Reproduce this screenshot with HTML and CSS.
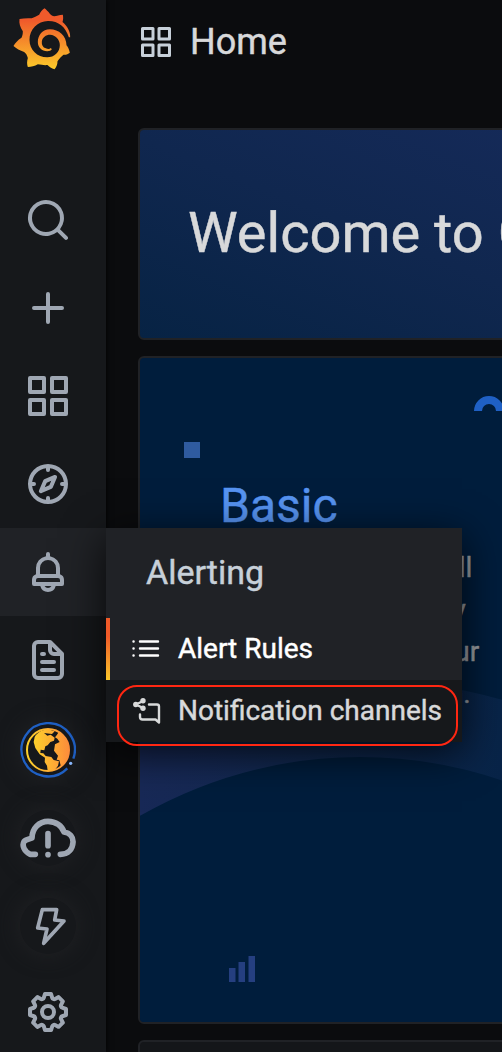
FILE: index.html
```html
<!DOCTYPE html>
<html lang="en">
<head>
<meta charset="utf-8">
<title>Home</title>
<link rel="stylesheet" href="styles.css">
</head>
<body>
<div class="app">
  <nav class="sidebar">
    <a class="brand">
      <svg class="logo" viewBox="40 24 173 186">
        <defs><linearGradient id="brand" x1="0" y1="0" x2="0" y2="1"><stop offset=".2" stop-color="#f05a2b"/><stop offset="1" stop-color="#fccb2a"/></linearGradient></defs>
        <path fill="url(#brand)" d="M211 112C212 94 202 78 188 66C191 58 190 50 189 44C179 45 170 47 163 49C158 48 154 45 150 41C145 35 139 29 134 25C127 30 122 36 118 44C110 48 103 52 96 55C82 54 70 55 59 57C57 70 61 82 69 94C69 102 68 108 65 113C54 120 46 129 41 138C49 146 61 152 73 156C79 161 82 166 84 174C81 184 81 193 84 201C94 201 105 199 114 193C125 195 136 196 143 195C148 200 155 205 164 208C170 201 173 193 173 184C178 176 184 170 191 164C198 165 205 162 210 158C208 149 205 142 200 136C200 108 177 88 150 88C128 88 114 106 114 126C114 142 126 153 142 154C149 154 154 151 156 148L153 144C149 148 143 147 138 145C129 142 125 134 126 125C127 112 138 104 151 104C167 105 180 119 180 135C180 156 164 172 142 172C112 172 89 149 89 119C89 88 114 64 144 63C174 62 198 80 207 112Z"/>
      </svg>
    </a>
    <a class="nav-item"><svg class="icon" viewBox="0 0 24 24"><path d="M21.71,20.29,18,16.61A9,9,0,1,0,16.61,18l3.68,3.68a1,1,0,0,0,1.42,0A1,1,0,0,0,21.71,20.29ZM11,18a7,7,0,1,1,7-7A7,7,0,0,1,11,18Z"/></svg></a>
    <a class="nav-item"><svg class="icon" viewBox="0 0 24 24"><path d="M19,11H13V5a1,1,0,0,0-2,0v6H5a1,1,0,0,0,0,2h6v6a1,1,0,0,0,2,0V13h6a1,1,0,0,0,0-2Z"/></svg></a>
    <a class="nav-item"><svg class="icon" viewBox="0 0 24 24"><path d="M10,13H3a1,1,0,0,0-1,1v7a1,1,0,0,0,1,1h7a1,1,0,0,0,1-1V14A1,1,0,0,0,10,13ZM9,20H4V15H9ZM21,2H14a1,1,0,0,0-1,1v7a1,1,0,0,0,1,1h7a1,1,0,0,0,1-1V3A1,1,0,0,0,21,2ZM20,9H15V4h5Zm1,4H14a1,1,0,0,0-1,1v7a1,1,0,0,0,1,1h7a1,1,0,0,0,1-1V14A1,1,0,0,0,21,13Zm-1,7H15V15h5ZM10,2H3A1,1,0,0,0,2,3v7a1,1,0,0,0,1,1h7a1,1,0,0,0,1-1V3A1,1,0,0,0,10,2ZM9,9H4V4H9Z"/></svg></a>
    <a class="nav-item"><svg class="icon" viewBox="0 0 24 24"><path d="M12,2A10,10,0,1,0,22,12,10,10,0,0,0,12,2Zm1,17.93V19a1,1,0,0,0-2,0v.93A8,8,0,0,1,4.07,13H5a1,1,0,0,0,0-2H4.07A8,8,0,0,1,11,4.07V5a1,1,0,0,0,2,0V4.07A8,8,0,0,1,19.93,11H19a1,1,0,0,0,0,2h.93A8,8,0,0,1,13,19.93ZM15.14,7.55l-5,2.12a1,1,0,0,0-.52.52l-2.12,5a1,1,0,0,0,.21,1.1,1,1,0,0,0,.7.3.93.93,0,0,0,.4-.09l5-2.12a1,1,0,0,0,.52-.52l2.12-5a1,1,0,0,0-1.31-1.31Zm-2.49,5.1-2.28,1,1-2.28,2.28-1Z"/></svg></a>
    <div class="nav-item active">
      <svg class="icon" viewBox="0 0 24 24"><path d="M18,13.18V10a6,6,0,0,0-5-5.91V3a1,1,0,0,0-2,0V4.09A6,6,0,0,0,6,10v3.18A3,3,0,0,0,4,16v2a1,1,0,0,0,1,1H8.14a4,4,0,0,0,7.72,0H19a1,1,0,0,0,1-1V16A3,3,0,0,0,18,13.18ZM8,10a4,4,0,0,1,8,0v3H8Zm4,10a2,2,0,0,1-1.72-1h3.44A2,2,0,0,1,12,20Zm6-3H6V16a1,1,0,0,1,1-1H17a1,1,0,0,1,1,1Z"/></svg>
      <div class="menu">
        <div class="menu-title">Alerting</div>
        <a class="menu-item selected">
          <svg class="menu-icon" viewBox="0 0 32 32"><path d="M3.500 8.500h.1M3.500 15.500h.1M3.500 22.500h.1M10 8.500h18M10 15.500h18M10 22.500h18"/></svg>
          <span>Alert Rules</span>
        </a>
        <a class="menu-item">
          <svg class="menu-icon" viewBox="0 0 32 32"><path d="M19 9.500H27Q29 9.500 29 11.500V27.500L25.500 24.500H12.500Q10 24.500 10 22V19.500M13 6L6 9.500L13 13"/><circle cx="5.800" cy="9.500" r="2.700"/><circle cx="13" cy="5.800" r="2.700"/><circle cx="13" cy="13.200" r="2.700"/></svg>
          <span>Notification channels</span>
        </a>
        <div class="highlight"></div>
      </div>
    </div>
    <a class="nav-item"><svg class="icon" viewBox="0 0 24 24"><path d="M9,10h1a1,1,0,0,0,0-2H9a1,1,0,0,0,0,2Zm0,2a1,1,0,0,0,0,2h6a1,1,0,0,0,0-2ZM20,8.940a1.310,1.310,0,0,0-.06-.27l0-.09a1.070,1.070,0,0,0-.19-.28h0l-6-6h0a1.070,1.070,0,0,0-.28-.19l-.1,0A1.100,1.100,0,0,0,13.060,2H7A3,3,0,0,0,4,5V19a3,3,0,0,0,3,3H17a3,3,0,0,0,3-3V9S20,9,20,8.940ZM14,5.410,16.590,8H15A1,1,0,0,1,14,7ZM18,19a1,1,0,0,1-1,1H7a1,1,0,0,1-1-1V5A1,1,0,0,1,7,4h5V7a3,3,0,0,0,3,3h3Zm-3-3H9a1,1,0,0,0,0,2h6a1,1,0,0,0,0-2Z"/></svg></a>
    <a class="nav-item">
      <span class="plugin globe"><svg viewBox="60 66 168 168" width="56" height="56">
        <defs><linearGradient id="globe"><stop offset="0" stop-color="#fcd02b"/><stop offset="1" stop-color="#ff8f3c"/></linearGradient></defs>
        <path fill="none" stroke="#1f60c4" stroke-width="7" d="M220 176A80 80 0 1 0 202 205"/>
        <circle cx="212" cy="190" r="5" fill="#8ab8ff"/>
        <circle cx="144" cy="150" r="63" fill="none" stroke="url(#globe)" stroke-width="6"/>
        <path fill="url(#globe)" d="M104 111C112 98 126 89 145 88L164 94L156 102L132 99L142 107L152 104L164 113L162 122L151 126L143 136L136 139L133 151L122 149L121 159L130 160L137 168L154 171L161 180L177 184L174 197L164 211L143 213L141 197L134 186L135 173L119 163L106 144L101 126ZM176 97C194 108 206 128 207 150C206 170 196 189 183 200L178 181L170 179L174 167L162 152L165 133L179 126L172 116L165 112L170 106Z"/>
      </svg></span>
    </a>
    <a class="nav-item">
      <span class="plugin"><svg class="line" viewBox="60 330 168 168" width="56" height="56"><path stroke-width="17" d="M106 463H90C73 454 65 437 72 425C78 416 88 418 96 414C96 385 118 364 144 364C168 364 186 378 192 396C210 399 220 412 219 427C218 447 205 463 181 463M144 401V437M144 464v.1"/></svg></span>
    </a>
    <a class="nav-item">
      <span class="plugin"><svg class="line" viewBox="60 84 168 168" width="56" height="56"><path stroke-width="11" d="M127 119H170L164 150L192 153L131 220L141 177L113 174Z"/></svg></span>
    </a>
    <a class="nav-item"><svg class="icon" viewBox="0 0 24 24"><path d="M21.320,9.550l-1.890-.63.890-1.780A1,1,0,0,0,20.130,6L18,3.870a1,1,0,0,0-1.150-.19l-1.780.89-.63-1.890A1,1,0,0,0,13.500,2h-3a1,1,0,0,0-.95.68L8.920,4.570,7.140,3.680A1,1,0,0,0,6,3.870L3.870,6a1,1,0,0,0-.19,1.150l.89,1.780-1.890.63A1,1,0,0,0,2,10.500v3a1,1,0,0,0,.68.950l1.890.63-.89,1.780A1,1,0,0,0,3.870,18L6,20.130a1,1,0,0,0,1.150.19l1.780-.89.630,1.890a1,1,0,0,0,.95.680h3a1,1,0,0,0,.95-.68l.63-1.890,1.780.89A1,1,0,0,0,18,20.130L20.130,18a1,1,0,0,0,.19-1.150l-.89-1.780,1.890-.63A1,1,0,0,0,22,13.500v-3A1,1,0,0,0,21.320,9.550ZM20,12.780l-1.200.4A2,2,0,0,0,17.640,16l.57,1.140-1.100,1.100L16,17.640a2,2,0,0,0-2.790,1.160l-.4,1.200H11.220l-.4-1.200A2,2,0,0,0,8,17.640l-1.140.57-1.100-1.100L6.360,16A2,2,0,0,0,5.200,13.180L4,12.780V11.220l1.200-.4A2,2,0,0,0,6.360,8L5.790,6.890l1.100-1.100L8,6.360A2,2,0,0,0,10.820,5.200l.4-1.200h1.560l.4,1.200A2,2,0,0,0,16,6.360l1.140-.57,1.100,1.100L17.640,8a2,2,0,0,0,1.160,2.790l1.200.4ZM12,8a4,4,0,1,0,4,4A4,4,0,0,0,12,8Zm0,6a2,2,0,1,1,2-2A2,2,0,0,1,12,14Z"/></svg></a>
  </nav>

  <main class="content">
    <header class="topbar">
      <svg class="home-icon" viewBox="2 2 20 20"><path d="M10,13H3a1,1,0,0,0-1,1v7a1,1,0,0,0,1,1h7a1,1,0,0,0,1-1V14A1,1,0,0,0,10,13ZM9,20H4V15H9ZM21,2H14a1,1,0,0,0-1,1v7a1,1,0,0,0,1,1h7a1,1,0,0,0,1-1V3A1,1,0,0,0,21,2ZM20,9H15V4h5Zm1,4H14a1,1,0,0,0-1,1v7a1,1,0,0,0,1,1h7a1,1,0,0,0,1-1V14A1,1,0,0,0,21,13Zm-1,7H15V15h5ZM10,2H3A1,1,0,0,0,2,3v7a1,1,0,0,0,1,1h7a1,1,0,0,0,1-1V3A1,1,0,0,0,10,2ZM9,9H4V4H9Z"/></svg>
      <span class="page-title">Home</span>
    </header>
    <section class="panel welcome"><h1>Welcome to Grafana</h1></section>
    <section class="panel steps">
      <svg class="backdrop" viewBox="140 358 700 664" width="700" height="664">
        <defs><linearGradient id="ring" gradientUnits="userSpaceOnUse" x1="140" y1="0" x2="502" y2="0"><stop offset="0" stop-color="#182957"/><stop offset=".5" stop-color="#10284f"/><stop offset="1" stop-color="#082448"/></linearGradient></defs>
        <circle cx="360" cy="1197" r="478.500" fill="none" stroke="url(#ring)" stroke-width="77"/>
        <rect x="140" y="820" width="700" height="210" fill="#001d3c"/>
        <path fill="#2f5b9f" d="M184 442h16v16h-16z"/>
        <path fill="none" stroke="#1f60c4" stroke-width="8" d="M478 411a11 11 0 0 1 22 0"/>
        <path fill="#253f80" d="M229 968h6.500v14h-6.500zM238.500 962h6.500v20h-6.500zM248.500 956h6.500v26h-6.500z"/>
      </svg>
      <div class="intro">
        <h2>Basic</h2>
        <p>The steps below will guide you to quickly finish setting up your Grafana installation.</p>
      </div>
    </section>
    <section class="panel next"></section>
  </main>
</div>
</body>
</html>
```

FILE: styles.css
```css
* { box-sizing: border-box; }
body {
  margin: 0;
  background: #0b0c0e;
  color: #d8d9da;
  font-family: Roboto, "Liberation Sans", sans-serif;
  -webkit-text-stroke: .45px currentColor;
  overflow: hidden;
}
h1, h2, p { margin: 0; font-weight: 400; }
svg { display: block; flex: none; }
.app { display: flex; width: 502px; height: 1052px; overflow: hidden; }

.sidebar {
  position: relative;
  z-index: 1;
  flex: none;
  width: 106px;
  background: #16181b;
  box-shadow: 0 0 6px #000;
}
.brand { display: block; height: 176px; padding: 8px 0 0 13px; }
.logo { width: 58px; height: 62px; }
.nav-item {
  display: flex;
  align-items: center;
  height: 88px;
  padding-left: 20px;
}
.icon { width: 56px; height: 48px; fill: #9fa7b3; }
.active { position: relative; background: #202226; }
.plugin {
  width: 56px;
  height: 56px;
  margin-top: 4px;
  border-radius: 50%;
  box-shadow: 0 0 20px 2px #1f2023;
}
.plugin:not(.globe) { margin-top: 3px; }
.line { fill: none; stroke: #9fa7b3; stroke-linecap: round; stroke-linejoin: round; }

.menu {
  position: absolute;
  left: 106px;
  top: 0;
  width: 356px;
  background: #16181b;
  box-shadow: 0 10px 40px rgba(0, 0, 0, .8);
}
.menu-title {
  height: 90px;
  padding-left: 40px;
  background: #202226;
  color: #c7d0d9;
  font-size: 34px;
  line-height: 88px;
}
.menu-item {
  display: flex;
  align-items: center;
  gap: 16px;
  height: 62px;
  padding-left: 24px;
  font-size: 28px;
  line-height: 62px;
  white-space: nowrap;
}
.selected {
  padding-left: 20px;
  border-left: 4px solid;
  border-image: linear-gradient(#f05a28 30%, #fbca2a) 1;
  background: #202226;
  color: #fff;
}
.menu-icon {
  width: 32px;
  height: 32px;
  fill: currentColor;
  stroke: currentColor;
  stroke-width: 2.4;
  stroke-linecap: round;
  stroke-linejoin: round;
}
.menu-icon path { fill: none; }
.menu-icon circle { stroke: none; }
.highlight {
  position: absolute;
  left: 11px;
  top: 157px;
  width: 341px;
  height: 61px;
  border: 2px solid #ff2712;
  border-radius: 20px;
}

.content { flex: none; width: 620px; padding-left: 32px; }
.topbar { display: flex; align-items: center; gap: 19px; height: 128px; padding: 0 0 44px 3px; }
.home-icon { width: 30px; height: 30px; fill: #c7d0d9; }
.page-title { font-size: 36px; line-height: 42px; }
.panel {
  position: relative;
  margin-bottom: 16px;
  border: 2px solid #202226;
  border-radius: 6px;
  overflow: hidden;
}
.welcome {
  height: 212px;
  padding-left: 48px;
  background: linear-gradient(22deg, #072344, #10274f 45%, #152a59 85%);
}
.welcome h1 { font-size: 56px; line-height: 207px; white-space: nowrap; }
.steps { height: 668px; background: #001d3c; }
.backdrop { position: absolute; left: 0; top: 0; }
.intro { position: relative; width: 345px; padding: 119px 0 0 80px; }
.intro h2 { color: #5794f2; font-size: 48px; line-height: 58px; }
.intro p { width: 265px; margin-top: 12px; color: #9fa2a8; font-size: 28px; line-height: 42px; }
.next { height: 80px; background: #141619; }
```
